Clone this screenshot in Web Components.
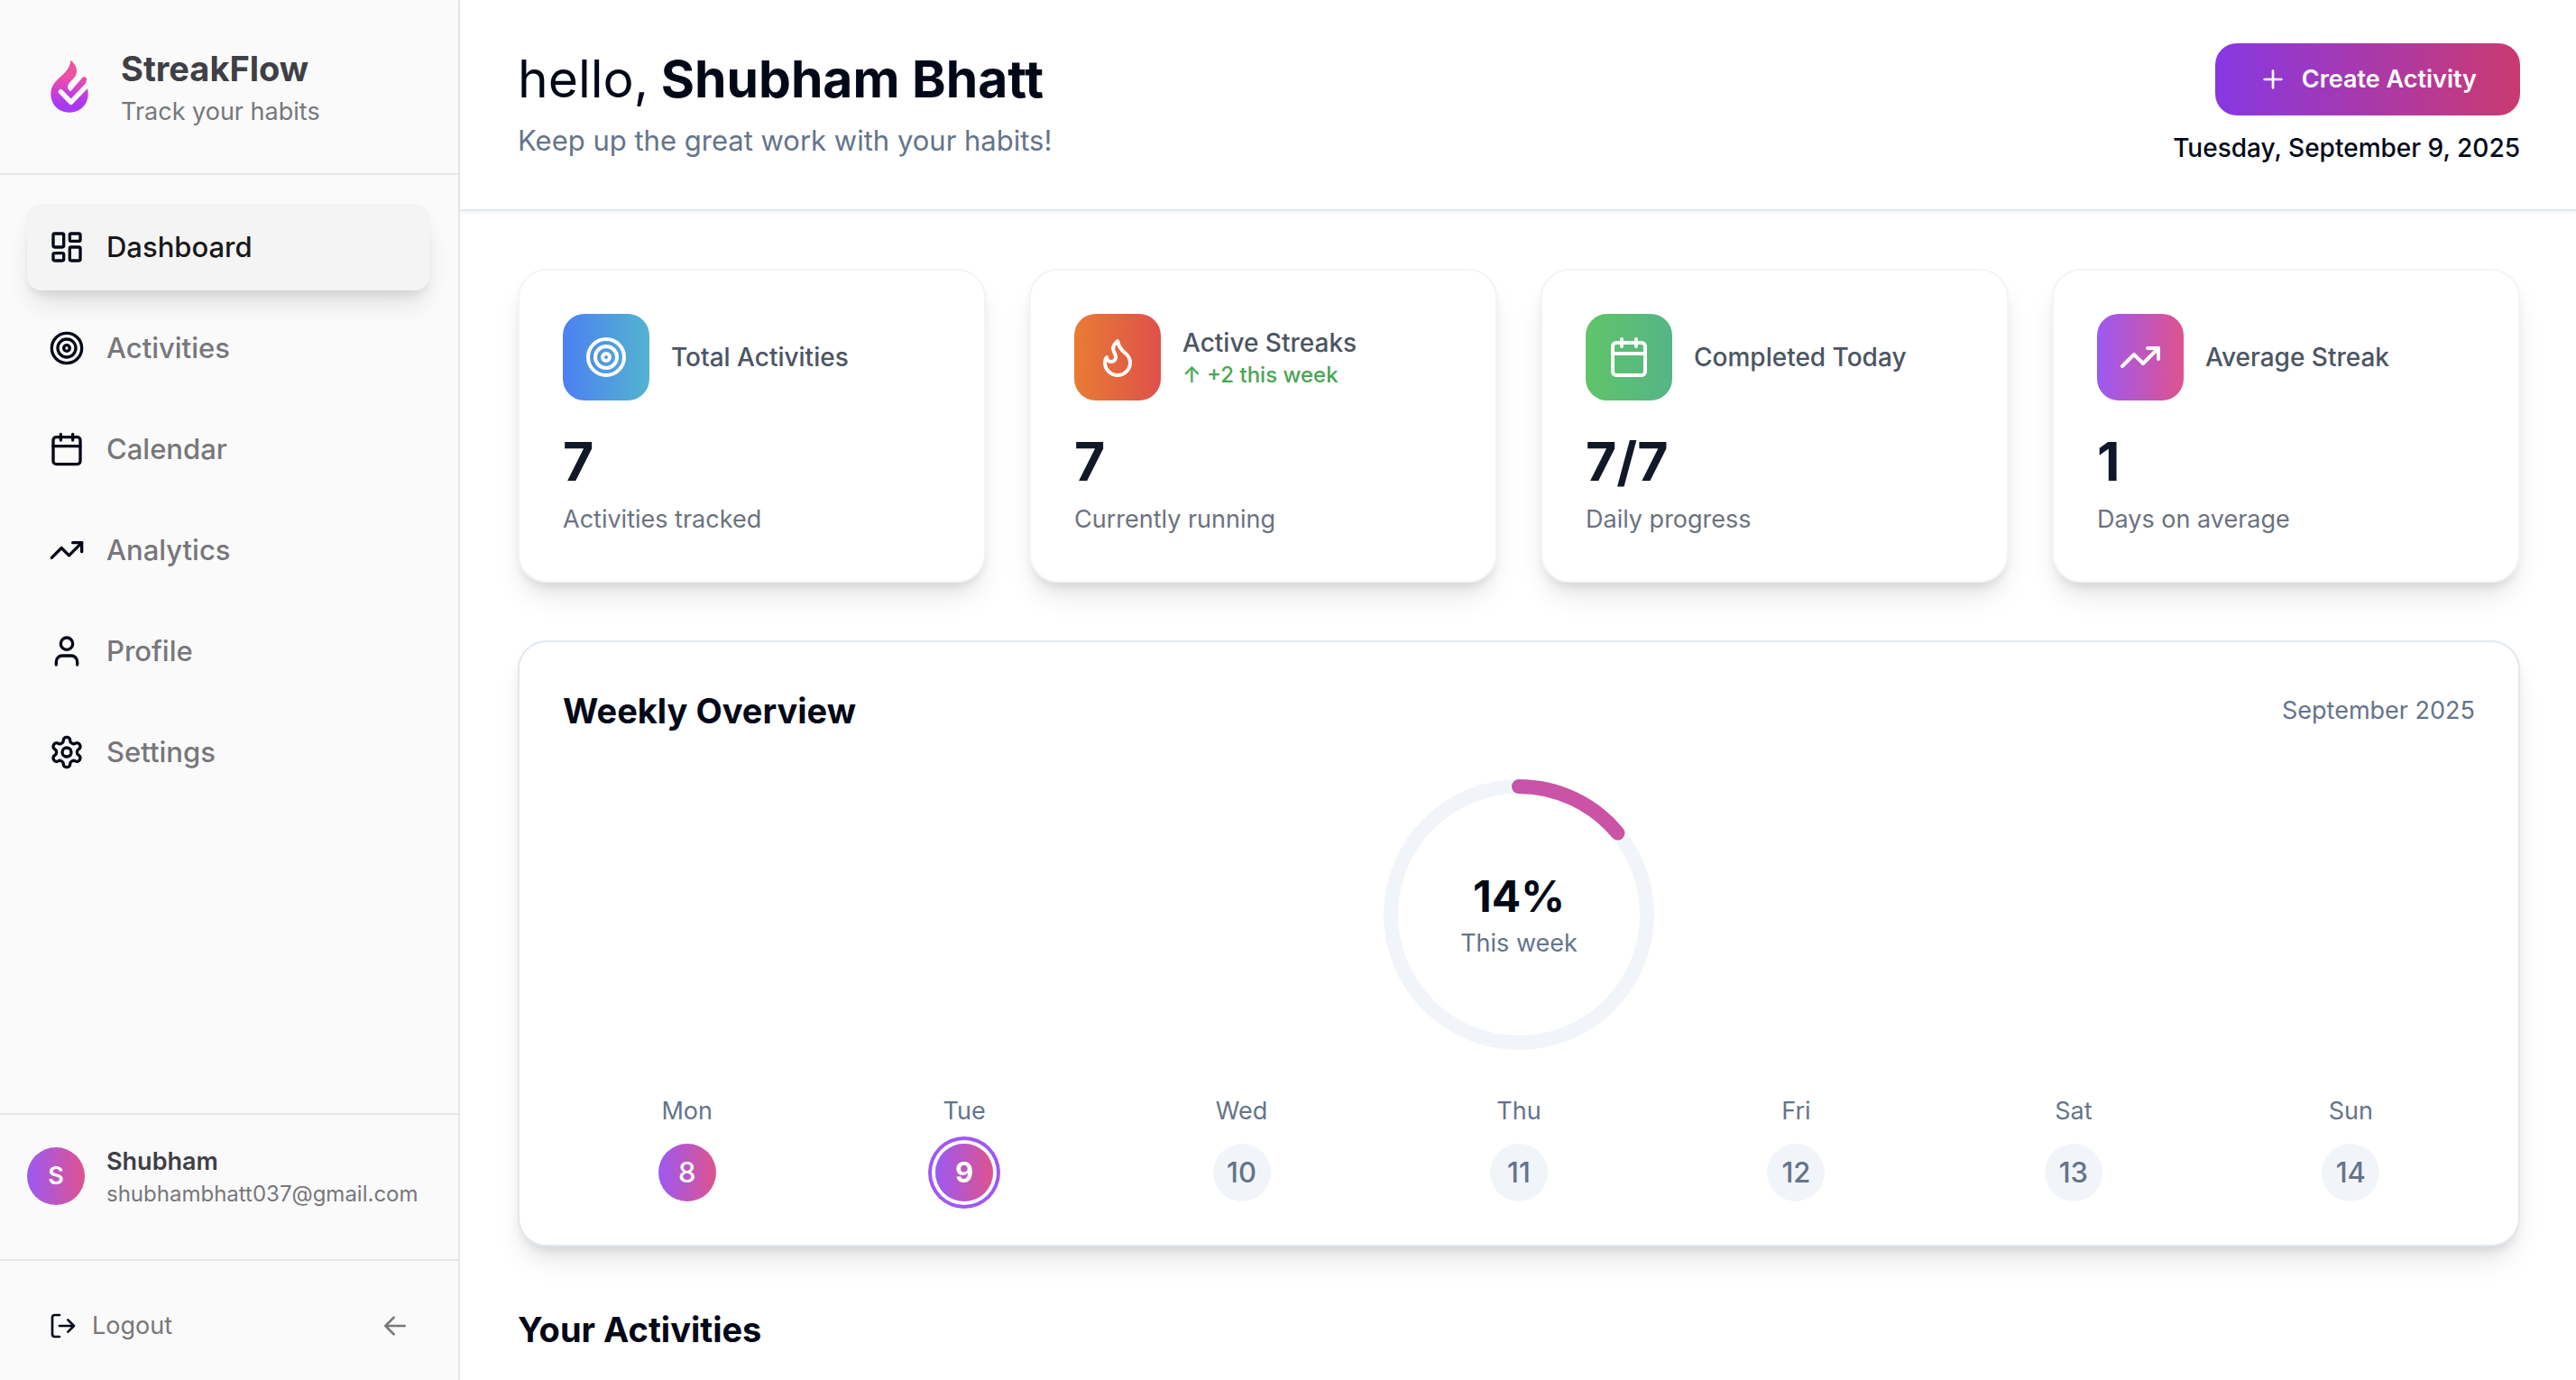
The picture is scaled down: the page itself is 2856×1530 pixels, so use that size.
<!DOCTYPE html>
<html lang="en">
<head>
<meta charset="utf-8">
<meta name="viewport" content="width=device-width, initial-scale=1">
<title>StreakFlow</title>
<style>
  html, body { margin: 0; height: 100%; }
  body {
    background: #fff;
    color: #020817;
    font-family: Inter, "Liberation Sans", sans-serif;
    font-size: 27px;
    line-height: 40px;
    --muted: #64748b;
    --line: #e5e7eb;
    --brand: linear-gradient(90deg, #9c59f2, #de538e);
    --lift: 0 20px 30px -6px rgba(0, 0, 0, .1), 0 8px 12px -4px rgba(0, 0, 0, .1);
  }
</style>
</head>
<body>
<streak-app></streak-app>
<script>
const ICONS = {
  dashboard: '<rect width="7" height="9" x="3" y="3" rx="1"/><rect width="7" height="5" x="14" y="3" rx="1"/><rect width="7" height="9" x="14" y="12" rx="1"/><rect width="7" height="5" x="3" y="16" rx="1"/>',
  target: '<circle cx="12" cy="12" r="10"/><circle cx="12" cy="12" r="6"/><circle cx="12" cy="12" r="2"/>',
  calendar: '<path d="M8 2v4M16 2v4M3 10h18"/><rect width="18" height="18" x="3" y="4" rx="2"/>',
  trend: '<path d="M22 7l-8.500 8.500-5-5L2 17"/><path d="M16 7h6v6"/>',
  user: '<path d="M19 21v-2a4 4 0 0 0-4-4H9a4 4 0 0 0-4 4v2"/><circle cx="12" cy="7" r="4"/>',
  settings: '<path d="M12.220 2h-.44a2 2 0 0 0-2 2v.18a2 2 0 0 1-1 1.730l-.43.25a2 2 0 0 1-2 0l-.15-.08a2 2 0 0 0-2.730.73l-.22.38a2 2 0 0 0 .73 2.730l.15.1a2 2 0 0 1 1 1.720v.51a2 2 0 0 1-1 1.740l-.15.09a2 2 0 0 0-.73 2.730l.22.38a2 2 0 0 0 2.730.73l.15-.08a2 2 0 0 1 2 0l.43.25a2 2 0 0 1 1 1.730V20a2 2 0 0 0 2 2h.44a2 2 0 0 0 2-2v-.18a2 2 0 0 1 1-1.730l.43-.25a2 2 0 0 1 2 0l.15.08a2 2 0 0 0 2.730-.73l.22-.39a2 2 0 0 0-.73-2.730l-.15-.08a2 2 0 0 1-1-1.740v-.5a2 2 0 0 1 1-1.740l.15-.09a2 2 0 0 0 .73-2.730l-.22-.38a2 2 0 0 0-2.730-.73l-.15.08a2 2 0 0 1-2 0l-.43-.25a2 2 0 0 1-1-1.730V4a2 2 0 0 0-2-2z"/><circle cx="12" cy="12" r="3"/>',
  flame: '<path d="M8.500 14.500A2.500 2.500 0 0 0 11 12c0-1.380-.5-2-1-3-1.072-2.143-.224-4.054 2-6 .5 2.500 2 4.900 4 6.500 2 1.600 3 3.500 3 5.500a7 7 0 1 1-14 0c0-1.153.433-2.294 1-3a2.500 2.500 0 0 0 2.500 2.500z"/>',
  logout: '<path d="M9 21H5a2 2 0 0 1-2-2V5a2 2 0 0 1 2-2h4"/><path d="M16 17l5-5-5-5M21 12H9"/>',
  plus: '<path d="M5 12h14M12 5v14"/>',
  back: '<path d="M11 5l-7 7 7 7M20 12H4"/>'
};

function define(name, css, html) {
  customElements.define(name, class extends HTMLElement {
    connectedCallback() {
      if (this.shadowRoot) return;
      const tpl = document.createElement('template');
      tpl.innerHTML = '<style>:host{display:block;box-sizing:border-box}*{box-sizing:border-box}h1,h2,h3,p,ul{margin:0;padding:0}' +
        css + '</style>' + (typeof html === 'function' ? html(this) : html);
      this.attachShadow({ mode: 'open' }).append(tpl.content.cloneNode(true));
    }
  });
}

define('line-icon',
  `:host{display:block;flex:none;width:var(--size,40px);height:var(--size,40px)}
   svg{display:block;width:100%;height:100%}`,
  el => `<svg viewBox="0 0 24 24" fill="none" stroke="currentColor" stroke-width="2" stroke-linecap="round" stroke-linejoin="round" aria-hidden="true">${ICONS[el.getAttribute('name')]}</svg>`);

define('brand-mark',
  `:host{flex:none;width:64px;height:72px} svg{display:block;width:100%;height:100%}`,
  `<svg viewBox="0 0 192 216" aria-hidden="true">
     <defs><linearGradient id="g" x1="0" y1="0" x2="0" y2="1">
       <stop offset="0" stop-color="#ef5896"/><stop offset=".35" stop-color="#ea4fa8"/><stop offset=".62" stop-color="#cb3ddd"/><stop offset=".85" stop-color="#a83af0"/><stop offset="1" stop-color="#a63af0"/>
     </linearGradient></defs>
     <path fill="url(#g)" d="M97 20C110 31 118 43 117 58C116 77 100 86 92 97C84 107 86 119 97 124L134 80C138 74 145 75 149 79C152 83 151 87 148 91L152 112C164 152 140 194 93 194C57 194 31 168 31 132C31 78 94 72 97 20Z"/>
     <path fill="none" stroke="#fafafa" stroke-width="16" stroke-linecap="round" stroke-linejoin="round" d="M64 125L98 160L158 97"/>
   </svg>`);

define('nav-item',
  `a{display:flex;align-items:center;gap:24px;height:96px;padding:0 24px;border-radius:16px;color:#77777b;font-size:31px;line-height:48px;font-weight:500;text-decoration:none}
   line-icon{color:#020817}
   :host([active]) a{background:#f4f4f4;color:#18181b;box-shadow:var(--lift)}`,
  el => `<a href="#${el.getAttribute('icon')}"${el.hasAttribute('active') ? ' aria-current="page"' : ''}><line-icon name="${el.getAttribute('icon')}"></line-icon><slot></slot></a>`);

define('side-bar',
  `:host{display:flex;flex-direction:column;flex:none;width:510px;min-height:100vh;background:#fafafa;border-right:2px solid var(--line)}
   header{display:flex;align-items:center;gap:24px;padding:48px 46px;border-bottom:2px solid var(--line)}
   h2{font-size:38px;line-height:56px;font-weight:700;color:#3f3f46}
   header p,.mail{color:#77777b}
   nav{flex:1;display:flex;flex-direction:column;gap:16px;padding:32px 32px 32px 30px}
   .user{display:flex;align-items:flex-start;gap:24px;padding:32px 30px 56px;border-top:2px solid var(--line)}
   .avatar{flex:none;display:grid;place-items:center;width:64px;height:64px;margin-top:4px;border-radius:50%;background:var(--brand);color:#fff;font-weight:600}
   .name{color:#3f3f46;font-weight:600}
   .mail{font-size:24px;line-height:32px}
   footer{display:flex;align-items:center;justify-content:space-between;padding:40px 54px 28px;border-top:2px solid var(--line)}
   button{display:flex;align-items:center;gap:16px;padding:0;border:0;background:none;font:inherit;color:#77777b;height:64px;--size:32px}
   .out line-icon{color:#020817}`,
  `<header><brand-mark></brand-mark><div><h2>StreakFlow</h2><p>Track your habits</p></div></header>
   <nav aria-label="Main">
     <nav-item icon="dashboard" active>Dashboard</nav-item>
     <nav-item icon="target">Activities</nav-item>
     <nav-item icon="calendar">Calendar</nav-item>
     <nav-item icon="trend">Analytics</nav-item>
     <nav-item icon="user">Profile</nav-item>
     <nav-item icon="settings">Settings</nav-item>
   </nav>
   <div class="user"><span class="avatar">S</span><div><p class="name">Shubham</p><p class="mail">shubhambhatt037@gmail.com</p></div></div>
   <footer><button class="out" type="button"><line-icon name="logout"></line-icon>Logout</button><button type="button" aria-label="Collapse sidebar"><line-icon name="back"></line-icon></button></footer>`);

define('page-header',
  `:host{display:flex;align-items:center;justify-content:space-between;padding:48px 62px 48px 64px;border-bottom:2px solid #e2e8f0;box-shadow:0 2px 4px rgba(0,0,0,.05)}
   h1{margin-bottom:8px;font-size:57px;line-height:72px;font-weight:700}
   h1 span{font-weight:400}
   .sub{font-size:31px;line-height:48px;color:var(--muted)}
   .side{display:flex;flex-direction:column;align-items:flex-end;gap:16px}
   button{display:flex;align-items:center;gap:16px;height:80px;padding:0 48px;border:0;border-radius:24px;background:linear-gradient(90deg,#8638e4,#cb3a70);color:#fff;font:inherit;font-weight:600;--size:32px}
   .date{font-size:28px;font-weight:500}`,
  `<div><h1><span>hello,</span> Shubham Bhatt</h1><p class="sub">Keep up the great work with your habits!</p></div>
   <div class="side"><button type="button"><line-icon name="plus"></line-icon>Create Activity</button><p class="date">Tuesday, September 9, 2025</p></div>`);

define('stat-card',
  `:host{padding:48px;border:2px solid #f3f4f6;border-radius:32px;background:#fff;box-shadow:var(--lift)}
   .top{display:flex;align-items:center;gap:24px;margin-bottom:32px}
   .tile{flex:none;display:grid;place-items:center;width:96px;height:96px;border-radius:24px;background:var(--tile);color:#fff;--size:48px}
   h3{font-size:28px;line-height:40px;font-weight:500;color:#4b5563}
   .up{font-size:24px;line-height:32px;font-weight:500;color:#4aa553}
   .value{margin-bottom:8px;font-size:59px;line-height:72px;font-weight:700;color:#111827}
   .note{color:#6b7280}`,
  el => `<div class="top"><span class="tile"><line-icon name="${el.getAttribute('icon')}"></line-icon></span><div><h3>${el.getAttribute('label')}</h3>${el.hasAttribute('change') ? `<p class="up">${el.getAttribute('change')}</p>` : ''}</div></div>
   <p class="value">${el.getAttribute('value')}</p><p class="note"><slot></slot></p>`);

define('progress-ring',
  `:host{display:grid;place-items:center;width:300px;height:300px}
   svg,.text{grid-area:1/1}
   svg{width:100%;height:100%}
   .text{text-align:center}
   .pct{font-size:48px;line-height:64px;font-weight:700}
   .cap{color:var(--muted)}`,
  el => `<svg viewBox="0 0 300 300" fill="none" stroke-width="16" aria-hidden="true">
     <defs><linearGradient id="g" x1="0" y1="0" x2="1" y2="1"><stop offset="0" stop-color="#9059e0"/><stop offset="1" stop-color="#d6529a"/></linearGradient></defs>
     <circle cx="150" cy="150" r="142" stroke="#f1f5f9"/>
     <circle cx="150" cy="150" r="142" stroke="url(#g)" stroke-linecap="round" pathLength="100" stroke-dasharray="${el.getAttribute('value')} 100" transform="rotate(-90 150 150)"/>
   </svg><div class="text"><p class="pct">${el.getAttribute('value')}%</p><p class="cap"><slot></slot></p></div>`);

define('week-day',
  `:host{display:flex;flex-direction:column;align-items:center;gap:16px;color:var(--muted)}
   .num{display:grid;place-items:center;width:64px;height:64px;border-radius:50%;background:#f1f5f9;font-size:31px;font-weight:500}
   :host([done]) .num{background:var(--brand);color:#fff}
   :host([today]) .num{font-weight:700;box-shadow:0 0 0 4px #fff,0 0 0 8px #9f58f1}`,
  el => `<span>${el.getAttribute('day')}</span><span class="num"><slot></slot></span>`);

define('week-card',
  `:host{padding:48px;border:2px solid #e2e8f0;border-radius:32px;background:#fff;box-shadow:var(--lift)}
   .head{display:flex;align-items:center;justify-content:space-between;margin-bottom:48px}
   h2{font-size:38px;line-height:56px;font-weight:700}
   .month{color:var(--muted)}
   progress-ring{margin:0 auto 48px}
   .days{display:grid;grid-template-columns:repeat(7,1fr);gap:32px}`,
  `<div class="head"><h2>Weekly Overview</h2><span class="month">September 2025</span></div>
   <progress-ring value="14">This week</progress-ring>
   <div class="days">
     <week-day day="Mon" done>8</week-day><week-day day="Tue" done today>9</week-day><week-day day="Wed">10</week-day><week-day day="Thu">11</week-day><week-day day="Fri">12</week-day><week-day day="Sat">13</week-day><week-day day="Sun">14</week-day>
   </div>`);

define('streak-app',
  `:host{display:flex;min-height:100vh}
   .page{flex:1;min-width:0}
   main{padding:64px 62px 28px 64px}
   .stats{display:grid;grid-template-columns:repeat(4,1fr);gap:48px;margin-bottom:64px}
   week-card{margin-bottom:64px}
   h2{font-size:38px;line-height:56px;font-weight:700}`,
  `<side-bar></side-bar>
   <div class="page">
     <page-header></page-header>
     <main>
       <div class="stats">
         <stat-card icon="target" label="Total Activities" value="7" style="--tile:linear-gradient(90deg,#4c80f2,#53b4d0)">Activities tracked</stat-card>
         <stat-card icon="flame" label="Active Streaks" change="↑ +2 this week" value="7" style="--tile:linear-gradient(90deg,#e97c34,#de504b)">Currently running</stat-card>
         <stat-card icon="calendar" label="Completed Today" value="7/7" style="--tile:linear-gradient(90deg,#60c469,#55b586)">Daily progress</stat-card>
         <stat-card icon="trend" label="Average Streak" value="1" style="--tile:var(--brand)">Days on average</stat-card>
       </div>
       <week-card></week-card>
       <h2>Your Activities</h2>
     </main>
   </div>`);
</script>
</body>
</html>
